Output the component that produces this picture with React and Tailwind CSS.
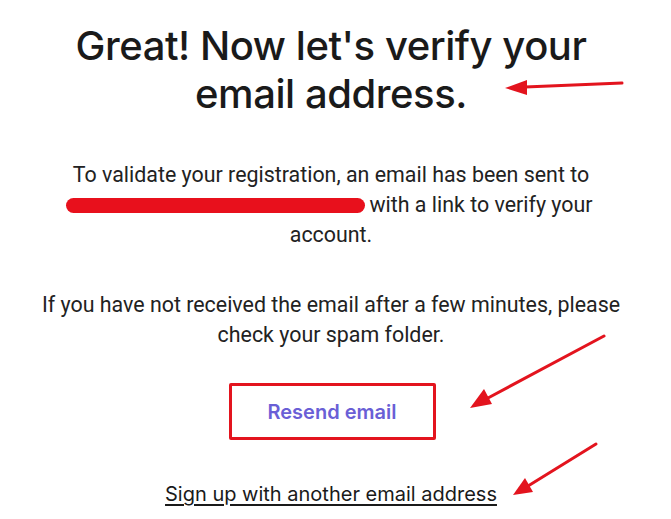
export default function App() {
  return (
    <div className="relative w-[671px] h-[519px] bg-white overflow-hidden">
      <div className="flex flex-col items-center pr-[9px]">
        <h1 className="mt-[22px] text-center text-[40px] leading-[48px] font-medium text-[#1a1a1a] tracking-[-0.45px] font-['Inter',sans-serif]">
          Great! Now let's verify your
          <br />
          email address.
        </h1>
        <p className="mt-[42px] text-center text-[21.4px] leading-[30px] text-[#222] font-['Roboto',sans-serif]">
          To validate your registration, an email has been sent to
          <br />
          <span className="relative -left-[3px] inline-block align-middle w-[299px] h-[15px] rounded-full bg-[#e8101c] mr-[1px] -mt-[1px]"></span>
          with a link to verify your
          <br />
          account.
        </p>
        <p className="mt-[40px] text-center text-[21.4px] leading-[30px] text-[#222] font-['Roboto',sans-serif]">
          If you have not received the email after a few minutes, please
          <br />
          check your spam folder.
        </p>
        <button className="mt-[33px] ml-[2px] w-[207px] h-[57px] border-[3px] border-[#e3141e] rounded-[2px] text-[20px] font-semibold text-[#6a5fd6] font-['Inter',sans-serif]">
          Resend email
        </button>
        <a className="mt-[39px] text-[20px] underline underline-offset-[3px] text-[#1a1a1a] font-['Inter',sans-serif]">
          Sign up with another email address
        </a>
      </div>
      <svg className="absolute inset-0 pointer-events-none" width="671" height="519" viewBox="0 0 671 519">
        <g stroke="#e3141e" strokeWidth="3" strokeLinecap="round" fill="#e3141e">
          <line x1="622" y1="83" x2="525" y2="87" />
          <polygon points="505,88 527,80 527,95" stroke="none" />
          <line x1="604" y1="336" x2="488" y2="398" />
          <polygon points="470,408 484,389 492,404" stroke="none" />
          <line x1="596" y1="444" x2="528" y2="486" />
          <polygon points="513,495 525,478 533,492" stroke="none" />
        </g>
      </svg>
    </div>
  );
}
